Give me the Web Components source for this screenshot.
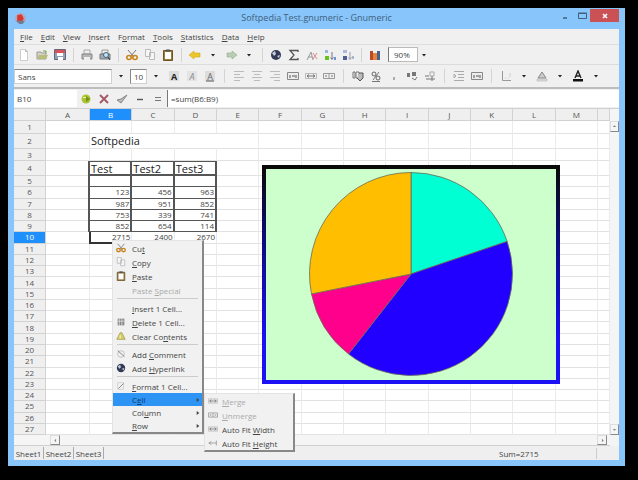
<!DOCTYPE html>
<html lang="en">
<head>
<meta charset="utf-8">
<title>Softpedia Test.gnumeric - Gnumeric</title>
<style>
html,body{height:100%}
body{margin:0;box-sizing:border-box;padding:8px 13px 14px 8px;background:#000;font:8px "Open Sans","Noto Sans",sans-serif;color:#444;overflow:hidden}
</style>
</head>
<body>
<gn-window></gn-window>
<script>
const svg=(b,w=12)=>`<svg viewBox="0 0 12 12" width="${w}" height="${w}" fill="none" stroke-width="1" aria-hidden="true">${b}</svg>`;
const T=(t,c='#555',s='')=>`<text x="6" y="9.5" text-anchor="middle" font-size="9" fill="${c}" ${s}>${t}</text>`;
const I={
 app:'<circle cx="6" cy="6" r="5" fill="#b9a3b8"/><path d="M3 3l4-1 2 4-2 4-4-1z" fill="#d9362d"/><path d="M2 8l3 3h3l2-3z" fill="#6d7f96"/>',
 new:'<path d="M2.5.5h5l2 2v9h-7z" fill="#fff" stroke="#ccc"/><path d="M7.5.5v2h2" stroke="#bbb"/>',
 open:'<path d="M1 3h4l1 1h4v6H1z" fill="#d5d3c3" stroke="#999"/><path d="M3 6h9l-2 4H1z" fill="#b8bd7b"/><path d="M7 2h3v2" stroke="#6fa03c"/>',
 save:'<path d="M.5.5h11v10H.5z" fill="#8aa0bd" stroke="#667"/><path d="M1 1h10v3H1z" fill="#d8525c"/><path d="M3 4h6v3H3zM4 8h5v3H4z" fill="#fff"/>',
 print:'<path d="M3 1h6v4H3z" fill="#eee" stroke="#aaa"/><path d="M1 5h10v5H1z" fill="#b5b5b5" stroke="#888"/><path d="M3 8h6v3H3z" fill="#eee"/>',
 preview:'<path d="M3 1h6v4H3z" fill="#eee" stroke="#999"/><path d="M1 5h10v5H1z" fill="#9eaab5" stroke="#777"/><circle cx="7" cy="6" r="2.5" fill="#bfe0f5" stroke="#467"/><path d="M9 8l2 3" stroke="#333"/>',
 cut:'<path d="M2 1l6 7M10 1L4 8" stroke="#777"/><ellipse cx="3" cy="8.5" rx="2.2" ry="2" stroke="#c8841c" stroke-width="1.6"/><ellipse cx="9" cy="8.5" rx="2.2" ry="2" stroke="#c8841c" stroke-width="1.6"/>',
 copy:'<path d="M1.500.5h5v7h-5zM5.500 3.500h5v7h-5z" fill="#f6f6f6" stroke="#bbb"/>',
 paste:'<path d="M1.500 1.500h9v10h-9z" fill="#9b7b3a" stroke="#6b5525"/><path d="M3 3h6v7H3z" fill="#fff"/><path d="M4 .5h4v2H4z" fill="#555"/>',
 undo:'<path d="M0 6l5-4v2h6v4H5v2z" fill="#ebc72c" stroke="#d2a91b" stroke-width=".6"/>',
 redo:'<path d="M12 6L7 2v2H2v4h5v2z" fill="#b9cdb4" stroke="#8fae8a" stroke-width=".6"/>',
 caret:'<path d="M4 5h4L6 7.500z" fill="#222"/>',
 globe:'<circle cx="6" cy="6" r="5" fill="#333a55"/><path d="M2 4l3-2 1 3-2 2zM7 7l3-1-1 3z" fill="#c7cbdc"/>',
 sum:'<path d="M10 3V1.500H2L6 6l-4 4.500h8V9" stroke="#555" stroke-width="1.3"/>',
 fx:'<path d="M1 11l4-8 2 8M2 8h4" stroke="#999"/><path d="M7 4l4 6M11 4L7 10" stroke="#d88"/>',
 asc:'<path d="M1 1h3v3H1z" fill="#96b6e6"/><path d="M1 7h4v4H1z" fill="#69c21c"/><path d="M8 3v7M6.500 8.500L8 10.500l1.500-2" stroke="#778"/><path d="M10 8h2v3h-2z" fill="#6794d7"/>',
 desc:'<path d="M1 1h4v3H1z" fill="#aab9de"/><path d="M1 7h4v4H1z" fill="#4e5f95"/><path d="M8 3v7M6.500 8.500L8 10.500l1.500-2" stroke="#99a"/><path d="M10 7h2v3h-2z" fill="#a8b4d0"/>',
 chart:'<path d="M1 2h3v9H1z" fill="#b9482c"/><path d="M4 4h4v7H4z" fill="#e88434"/><path d="M8 2h3v9H8z" fill="#46628f"/>',
 bold:'<path d="M1 1h10v10H1z" fill="#ddd"/>'+T('A','#222','font-weight="bold"'),
 ital:'<path d="M1 1h10v10H1z" fill="#e4e4e4"/>'+T('A','#888','font-style="italic"'),
 und:'<path d="M1 1h10v10H1z" fill="#ddd"/>'+T('A','#666')+'<path d="M2 11h8" stroke="#555"/>',
 left:'<path d="M1 1.500h10M1 4.500h6M1 7.500h10M1 10.500h6" stroke="#bbb"/>',
 mid:'<path d="M1 1.500h10M3 4.500h6M1 7.500h10M3 10.500h6" stroke="#bbb"/>',
 right:'<path d="M1 1.500h10M5 4.500h6M1 7.500h10M5 10.500h6" stroke="#bbb"/>',
 across:'<path d="M.5 2.500h11v7H.5z" fill="#eee" stroke="#888"/><path d="M3 5v3M5 6h3M9 5v3" stroke="#555"/>',
 merge:'<path d="M.5 3.500h11v5H.5z" stroke="#bbb"/><path d="M2 6h8M4 4.500L2 6l2 1.500M8 4.500L10 6 8 7.500" stroke="#777"/>',
 split:'<path d="M.5 3.500h11v5H.5zM6 3.500v5" stroke="#999"/><path d="M2 6h2M8 6h2" stroke="#777"/>',
 money:'<path d="M1 2v6h2V2zM4 2v6h3V2z" stroke="#777"/><path d="M7 3h4v5l-3 3-3-3" stroke="#555" fill="#bbb"/>',
 pct:'<circle cx="4" cy="4" r="2" stroke="#666"/><circle cx="8" cy="8" r="2" stroke="#666"/><path d="M9 2L3 10M2 11.500h8" stroke="#777"/>',
 comma:'<path d="M6 7v3" stroke="#666"/>',
 dec:'<path d="M1 3h3v4H1zM6 2h4v4H6z" fill="#777"/><path d="M6 8l3 2 2-3" stroke="#777"/>',
 inc:'<path d="M6 2h4v4H6z" stroke="#aaa"/><path d="M1 6h4M2 9h9M8 6v5" stroke="#777"/>',
 ind:'<path d="M1 1.500h10M5 4.500h6M5 7.500h6M1 10.500h10M1 4v4l2-2z" stroke="#aaa"/>',
 border:'<path d="M2.500 1v9.500H11" stroke="#999"/><path d="M5 8h1M8 8h1M10 3v4" stroke="#ccc"/>',
 fill:'<path d="M2 8l4-6 4 6z" fill="#ccc" stroke="#888"/><path d="M1 9h10v2H1z" fill="#ddd" stroke="#aaa" stroke-width=".5"/>',
 fcol:'<path d="M3 8l3-7 3 7M4 6h4" stroke="#222" stroke-width="1.4"/><path d="M1 9h10v2.500H1z" fill="#111"/>',
 ball:'<circle cx="6" cy="6" r="4.500" fill="#a9c42e"/><path d="M6 3l4 3-4 3z" fill="#71921b"/><path d="M3 4h3v1H3z" fill="#eef5a5"/>',
 no:'<path d="M2 2l8 8M10 2L2 10" stroke="#a55a68" stroke-width="2"/>',
 yes:'<path d="M1 7l4 3 6-8-6 4z" fill="#bbb" stroke="#888"/>',
 minus:'<path d="M3 6.500h6" stroke="#555" stroke-width="1.4"/>',
 eq:'<path d="M3 4.500h6M3 7.500h6" stroke="#777"/>',
 del:'<path d="M2 2h8v8H2z" fill="#888"/><path d="M4 2v8M7 2v8M2 5h8" stroke="#ddd"/>',
 clear:'<path d="M1 10l4-8h2l4 8z" fill="#d5cf62" stroke="#aaa05a"/><path d="M5 5v4" stroke="#fff"/>',
 note:'<circle cx="6" cy="6" r="4" stroke="#bbb"/><path d="M2 2l8 7" stroke="#777"/>',
 fmt:'<path d="M2 2h7v8H2z" stroke="#ccc"/><path d="M3 9l6-6" stroke="#777"/>',
 arrow:'<path d="M4 3l4 3-4 3z" fill="#444"/>',
 height:'<path d="M1 6h9M4 4L1 6l3 2M10 3v6" stroke="#999"/>',
 up:'<path d="M3 7l3-3 3 3z" fill="#888"/>',dn:'<path d="M3 5l3 3 3-3z" fill="#888"/>',lt:'<path d="M7 3L4 6l3 3z" fill="#888"/>',rt:'<path d="M5 3l3 3-3 3z" fill="#888"/>'
};
const mn=s=>s.replace(/_(.)/,'<u>$1</u>');
const base=`*{box-sizing:border-box}button,input,select{font:inherit;color:inherit;margin:0;padding:0;border:0;background:none;border-radius:0;min-width:0}button{display:flex;align-items:center;justify-content:center}svg{display:block;flex:none}u{text-underline-offset:1px}`;
const def=(n,css,html)=>customElements.define(n,class extends HTMLElement{
 connectedCallback(){ if(this.shadowRoot)return; this.attachShadow({mode:'open'}).innerHTML=`<style>${base}${css}</style>${html}`; }
});
const bar=s=>s.split(' ').map(k=>k==='|'?'<i></i>':`<button type="button" aria-label="${k}">${svg(I[k])}</button>`).join('');
const barCss=`button{width:18px;height:16px;flex:none}i{flex:none;width:9px;height:14px;background:linear-gradient(#d4d4d4,#d4d4d4) center/1px 100% no-repeat}`;

def('gn-title',`:host{display:flex;height:21px;flex:none;background:#87c5fa;color:#41607d;font-size:9px}
 .l{flex:1;padding:4px 0 0 0}.t{line-height:20px}.r{flex:1;display:flex;justify-content:flex-end;align-items:flex-start;padding-top:1px}
 .r button{width:17px;height:13px}.r .c{width:29px;background:#cb5254}`,
 `<div class="l">${svg(I.app,13)}</div><div class="t">Softpedia Test.gnumeric - Gnumeric</div><div class="r">
 <button aria-label="Minimize">${svg('<path d="M4 8h4" stroke="#41607d" stroke-width="1.500"/>')}</button><button aria-label="Maximize">${svg('<path d="M2.500 3.500h8v5h-8zM2 3h9" stroke="#41607d"/>')}</button><button class="c" aria-label="Close">${svg('<path d="M4 4l4 4M8 4L4 8" stroke="#fff" stroke-width="1.600"/>')}</button></div>`);

def('gn-menubar',`:host{display:flex;height:16px;flex:none;padding-left:6px;gap:8px;border-bottom:1px solid #dedede;align-items:center}`,
 ['_File','_Edit','_View','_Insert','F_ormat','_Tools','_Statistics','_Data','_Help'].map(m=>`<button type="button"><span>${mn(m)}</span></button>`).join(''));

def('gn-toolbar',`:host{display:flex;height:20px;flex:none;padding-left:1px;border-bottom:1px solid #dcdcdc;align-items:center}${barCss}
 input{width:30px;height:15px;margin-left:4px;padding-left:5px;background:#fff;border:1px solid #bbb;border-left-color:#777}button:last-child{width:12px}`,
 bar('new open save | print preview | cut copy paste | undo caret redo caret | globe sum fx asc desc | chart')+`<input aria-label="Zoom" value="90%">`+bar('caret'));

def('gn-formatbar',`:host{display:flex;height:24px;flex:none;border-bottom:2px solid #bdbdbd;align-items:center}${barCss}i{width:11px}
 input{background:#fff;height:15px;border:1px solid #d0d0d0;border-top-color:#888;padding-left:3px}.f{width:98px}.s{width:17px;border-left-color:#888}`,
 `<input class="f" aria-label="Font" value="Sans">${bar('caret')}<input class="s" aria-label="Font size" value="10">${bar('caret bold ital und | left mid right across merge split | money pct comma dec inc | ind across | border caret fill caret fcol caret')}`);

def('gn-formulabar',`:host{display:flex;height:20px;flex:none;align-items:center;border-bottom:1px solid #cfcfcf}${barCss}
 input{background:#fff;height:17px;padding-left:3px}.n{width:63px}.e{flex:1;border-left:1px solid #777}`,
 `<input class="n" aria-label="Cell" value="B10">${bar('ball no yes minus eq')}<input class="e" aria-label="Formula" value="=sum(B6:B9)">`);

const data={6:[123,456,963],7:[987,951,852],8:[753,339,741],9:[852,654,114],10:[2715,2400,2670]};
const cols='ABCDEFGHIJKLM'.split('');
const rowHtml=r=>{let h=`<tr class="r${r}"><th scope="row">${r}</th>`;
 for(let c=0;c<14;c++){let v='',k='';
  if(c>0&&c<4){ if(r===2&&c===1)v='Softpedia'; if(r===4)v=['Test','Test2','Test3'][c-1]; if(data[r])v=data[r][c-1]; if(r>3&&r<10)k='b'; if(r===10&&c===1)k='cur'; if(r===4||r===2)k+=' h';}
  h+=`<td class="${k}">${v}</td>`;} return h+'</tr>';};
def('gn-sheet',`:host{display:grid;grid-template:1fr 11px/1fr 9px;flex:1;min-height:0;position:relative;background:#f4f4f4}
 table{display:flex;flex-direction:column;min-width:0;min-height:0;background:#fff}thead{flex:none}tbody{flex:1;display:flex;flex-direction:column;min-height:0}
 tr{display:grid;grid-template-columns:32px 44px repeat(12,minmax(0,1fr)) 12px;flex:1;min-height:0}thead tr{height:12px}.r1{flex:0 0 13px}.r2,.r4{flex:0 0 15px}.r3{flex:0 0 12px}
 th,td{padding:0;line-height:10px;min-width:0;min-height:0;border-right:1px solid #ebebeb;border-bottom:1px solid #e2e2e2;white-space:nowrap}
 th{font-weight:400;background:#efefef;border-color:#d2d2d2;color:#555;text-align:center;display:flex;align-items:center;justify-content:center}
 th.on,.r10 th{background:#1e8ffb;color:#fff}td{text-align:right;padding-right:1px;color:#444}
 td.b{border-color:#555;border-right-width:2px}td.b:nth-child(3){box-shadow:-2px 0 #555}.r4 td.b{border-top:1px solid #555;border-bottom-width:2px}
 td.h{text-align:left;font-size:11px;line-height:13px;color:#222;padding-left:1px}.r2 td.h{border-right-color:transparent}
 td.cur{border-left:2px solid #333;border-bottom:2px solid #333;margin-left:-1px}
 .v,.hs{display:flex;justify-content:space-between;background:#f5f5f5}.v{flex-direction:column;padding-top:12px}.hs{padding:0 3px 0 36px;border-bottom:1px solid #d0d0d0}
 .v button{width:9px;height:11px;border:1px solid #ddd;border-right-color:#888;border-bottom-color:#888}.hs button{width:10px;height:10px;border:1px solid #ddd;border-right-color:#888;border-bottom-color:#888}
 gn-pie{position:absolute;left:248px;top:56px}gn-context{position:absolute;left:98px;top:131px}`,
 `<table><thead><tr><th></th>${cols.map(c=>`<th scope="col"${c==='B'?' class="on"':''}>${c}</th>`).join('')}<th></th></tr></thead><tbody>${Array.from({length:27},(_,i)=>rowHtml(i+1)).join('')}</tbody></table>
 <div class="v"><button aria-label="Scroll up">${svg(I.up,7)}</button><button aria-label="Scroll down">${svg(I.dn,7)}</button></div>
 <div class="hs"><button aria-label="Scroll left">${svg(I.lt,7)}</button><button aria-label="Scroll right">${svg(I.rt,7)}</button></div>
 <gn-pie></gn-pie><gn-context></gn-context>`);

const P=a=>{a=a*Math.PI/180;return `${145+101.5*Math.sin(a)} ${105-101.5*Math.cos(a)}`;};
const wedge=(a,b,c)=>`<path d="M145 105L${P(a)}A101.5 101.5 0 0 1 ${P(b)}z" fill="${c}" stroke="#6b6b55" stroke-width=".8"/>`;
def('gn-pie',`:host{display:block;padding:4px;background:linear-gradient(#0a0a0a 2%,#0c0c80 35%,#1c10f5 80%)}svg{background:#cfc}`,
 `<svg width="290" height="211" viewBox="0 0 290 211" role="img" aria-label="Pie chart">${wedge(0,71.3,'#00ffd2')}${wedge(71.3,218,'#2200ff')}${wedge(218,258.7,'#ff008c')}${wedge(258.7,360,'#ffbf00')}</svg>`);

const item=([ic,t,o=''])=>ic==='-'?'<hr>':`<button type="button" role="menuitem" class="${o}"${o.includes('off')?' disabled':''}><span class="i">${ic?svg(I[ic],10):''}</span><span>${mn(t)}</span>${o.includes('sub')?`<span class="a">${svg(I.arrow,8)}</span>`:''}</button>`;
const mCss=`.m{background:#f1f1f1;border:1px solid #e4e4e4;border-right:2px solid #888;border-bottom:2px solid #888;display:flex;flex-direction:column}
 button{height:14px;justify-content:flex-start;white-space:nowrap}.i{width:19px;padding-left:3px;flex:none}.off{color:#aaa}.a{margin-left:auto}.sub{height:13px}.on{background:#2e94f4;color:#0b3a6a}hr{margin:1px 4px 2px;border:0;border-top:1px solid #ccc;height:1px}`;
def('gn-context',`:host{display:block}${mCss}.p{width:92px}.s{position:absolute;left:92px;top:153px;width:91px}.s .i{width:17px}`,
 `<div class="m p" role="menu">${[['cut','Cu_t'],['copy','_Copy'],['paste','_Paste'],['','Paste _Special','off'],['-'],['','_Insert 1 Cell...'],['del','_Delete 1 Cell...'],['clear','Clear Co_ntents'],['-'],['note','Add _Comment'],['globe','Add _Hyperlink'],['-'],['fmt','_Format 1 Cell...'],['','C_ell','sub on'],['','Col_umn','sub'],['','_Row','sub']].map(item).join('')}</div>
 <div class="m s" role="menu">${[['merge','_Merge','off'],['split','_Unmerge','off'],['merge','Auto Fit _Width'],['height','Auto Fit _Height']].map(item).join('')}</div>`);

def('gn-status',`:host{display:flex;height:14px;flex:none;background:#efefef;align-items:center}
 button{width:30px;height:12px;border-right:1px solid #aaa}button:first-child{background:#f8f8f8}.g{flex:1}output{width:98px;border-right:1px solid #ccc}.e{width:22px}`,
 `<button>Sheet1</button><button>Sheet2</button><button>Sheet3</button><span class="g"></span><output>Sum=2715</output><span class="e"></span>`);

def('gn-window',`:host{display:flex;flex-direction:column;height:100%;box-sizing:border-box;background:#f0f0f0;border:solid #87c5fa;border-width:0 6px 6px}`,
 `<gn-title></gn-title><gn-menubar></gn-menubar><gn-toolbar></gn-toolbar><gn-formatbar></gn-formatbar><gn-formulabar></gn-formulabar><gn-sheet></gn-sheet><gn-status></gn-status>`);
</script>
</body>
</html>
